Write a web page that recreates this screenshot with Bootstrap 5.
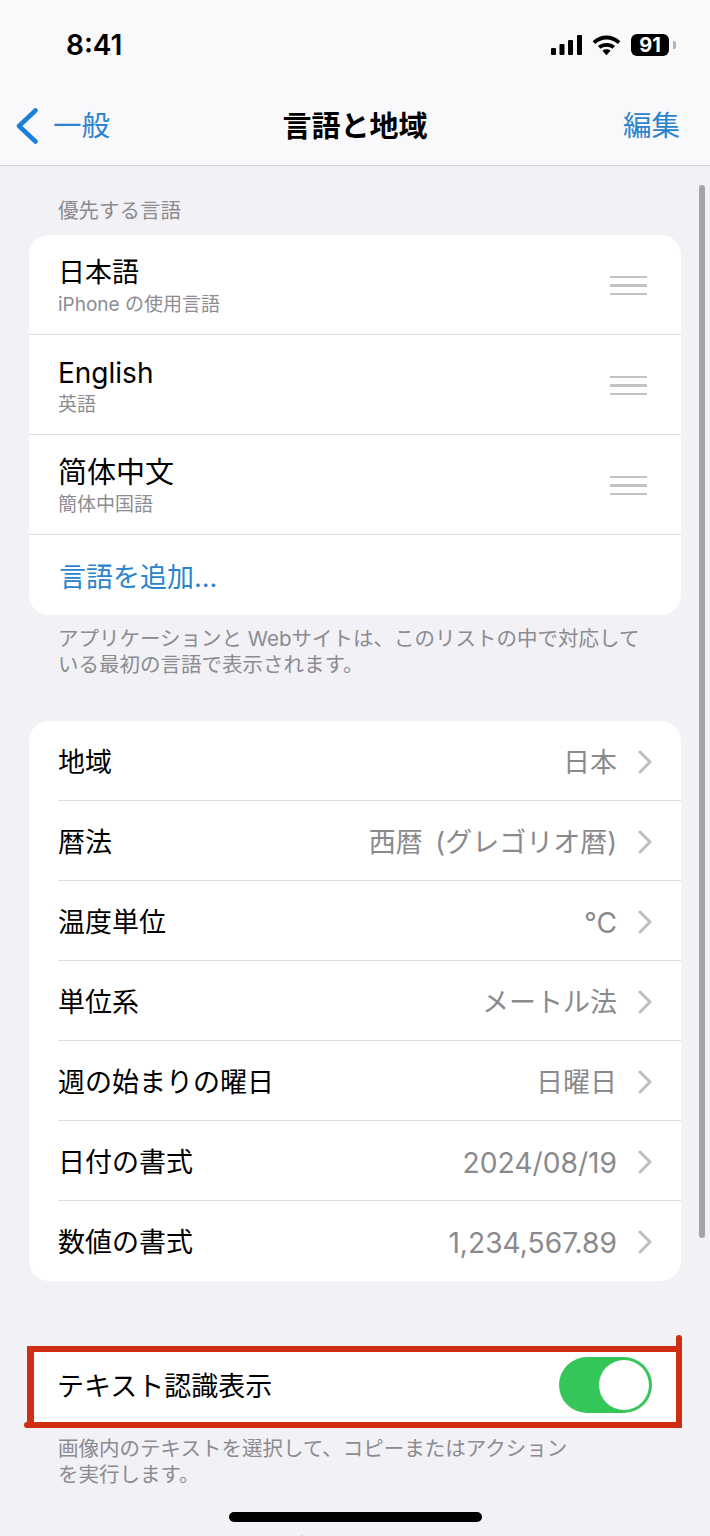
<!DOCTYPE html>
<html lang="ja">
<head>
<meta charset="utf-8">
<title>言語と地域</title>
<link href="https://cdn.jsdelivr.net/npm/bootstrap@5.3.0/dist/css/bootstrap.min.css" rel="stylesheet">
<style>
html,body{height:1536px;overflow:hidden}
body{width:710px;background:#f1f1f6;color:#000;font-family:"Inter","Liberation Sans","Noto Sans CJK JP",sans-serif;position:relative}
.ios-head{height:166px;background:#f9f9fb;border-bottom:1px solid #d6d6da}
.ios-status{height:90px;padding:0 34px 0 66px}
.ios-time{font-size:28px;font-weight:600;line-height:1}
.ios-icons{gap:10px}
.ios-batt{width:38px;height:22px;background:#000;color:#fff;border-radius:6px;font-size:20px;font-weight:700;line-height:22px;text-align:center}
.ios-nub{width:3px;height:8px;background:#b5b5b5;border-radius:0 2px 2px 0;margin-left:4px}
.ios-nav{height:75px;padding:0 30px 3px 16px}
.ios-link{color:#2b84cd;font-size:28.500px;line-height:1}
.ios-title{font-size:29px;font-weight:700;line-height:1;flex:none;margin-left:14px}
.ios-back{flex:1 1 0;gap:15px}
.ios-edit{flex:1 1 0;text-align:right}
.ios-main{padding:0 29px}
.ios-label{color:#8b8b90;font-size:20.500px;line-height:26px;padding:32px 0 11px 29px}
.ios-card{background:#fff;border-radius:20px;overflow:hidden}
.ios-card-gap{margin-top:43px}
.lang-row{height:100px;padding-left:29px;padding-right:34px}
.lang-name{font-size:27px;line-height:32px;padding-top:22px}
.lang-latin{font-size:28px}
.lang-wide{font-size:29px}
.lang-sub{font-size:19px;line-height:24px;color:#8c8c91;margin-top:4px}
.lang-inner{border-bottom:1px solid #dcdce0}
.lang-add{height:80px;padding-left:30px;padding-top:6px;color:#2b84cd;font-size:27px}
.grip{width:37px;display:flex;flex-direction:column;gap:5.800px;margin-top:2px}
.grip i{display:block;height:2.500px;background:#c3c3c6}
.ios-note{color:#8b8b90;font-size:20.500px;line-height:26px;padding:11px 29px 0}
.ios-note-tight{padding-top:8px}
.set-row{height:80px;padding-left:29px;padding-right:29px;padding-top:4px;position:relative;font-size:27px}
.set-row+.set-row::before{content:"";position:absolute;left:29px;right:0;top:-1px;height:1px;background:#dcdce0}
.set-val{color:#8a8a8e;margin-left:auto;margin-right:21px;word-spacing:5px}
.set-num{font-size:28.200px}
.chev{width:14px;height:24px;flex:none;margin-top:-3px}
.frame-row{height:82px;margin-top:65px;margin-left:-2px;margin-right:-1px;background:#fff;border:solid #cf2e12;border-width:6px 6px 6px 7px;padding:0 24px 4px 23px;font-size:27px;position:relative}
.frame-text{margin-top:4px}
.frame-tick{position:absolute;right:-6px;top:-17px;width:6px;height:11px;background:#cf2e12;border-radius:3px 3px 0 0}
.frame-foot{position:absolute;left:-10px;bottom:-6px;width:10px;height:6px;background:#cf2e12;border-radius:3px 0 0 3px}
.tog{width:93px;height:56px;background:#34c659;border-radius:28px;padding:3px;display:flex;justify-content:flex-end}
.tog i{display:block;width:50px;height:50px;background:#fff;border-radius:50%}
.ios-next{color:#8b8b90;font-size:22px;line-height:26px;text-align:center;margin-top:45px}
.scroll-thumb{position:absolute;left:699px;top:185px;width:6px;height:1053px;background:#a3a3a8;border-radius:3px}
.home-bar{position:absolute;left:229px;top:1512px;width:253px;height:10px;background:#000;border-radius:5px}
</style>
</head>
<body>
<header class="ios-head">
  <div class="ios-status d-flex align-items-center justify-content-between">
    <span class="ios-time">8:41</span>
    <div class="ios-icons d-flex align-items-center">
      <svg width="31" height="20" viewBox="0 0 31 20" fill="#000" aria-hidden="true"><rect x="0" y="13" width="5" height="7" rx="1"/><rect x="8.500" y="9" width="5" height="11" rx="1"/><rect x="17" y="5" width="5" height="15" rx="1"/><rect x="26" y="0" width="5" height="20" rx="1"/></svg>
      <svg width="29" height="22" viewBox="0 0 30 22" fill="none" stroke="#000" stroke-width="4" aria-hidden="true"><path d="M2 8.500C9.500 1.500 20.500 1.500 28 8.500"/><path d="M7.500 13.500C11.500 10 18.500 10 22.500 13.500"/><path d="M15 21.500L10.800 17C13 15 17 15 19.200 17Z" fill="#000" stroke="none"/></svg>
      <div class="d-flex align-items-center"><div class="ios-batt">91</div><div class="ios-nub"></div></div>
    </div>
  </div>
  <nav class="ios-nav d-flex align-items-center">
    <div class="ios-back ios-link d-flex align-items-center">
      <svg width="22" height="36" viewBox="0 0 22 36" fill="none" stroke="#1a7fd8" stroke-width="4.500" stroke-linecap="round" stroke-linejoin="round" aria-hidden="true"><path d="M19.500 2.500L3 18l16.500 15.500"/></svg>
      <span>一般</span>
    </div>
    <div class="ios-title">言語と地域</div>
    <div class="ios-edit ios-link">編集</div>
  </nav>
</header>
<main class="ios-main">
  <div class="ios-label">優先する言語</div>
  <section class="ios-card">
    <div class="lang-row d-flex justify-content-between align-items-center lang-inner">
      <div class="align-self-start"><div class="lang-name">日本語</div><div class="lang-sub">iPhone の使用言語</div></div>
      <div class="grip"><i></i><i></i><i></i></div>
    </div>
    <div class="lang-row d-flex justify-content-between align-items-center lang-inner">
      <div class="align-self-start"><div class="lang-name lang-latin">English</div><div class="lang-sub">英語</div></div>
      <div class="grip"><i></i><i></i><i></i></div>
    </div>
    <div class="lang-row d-flex justify-content-between align-items-center lang-inner">
      <div class="align-self-start"><div class="lang-name lang-wide">简体中文</div><div class="lang-sub">簡体中国語</div></div>
      <div class="grip"><i></i><i></i><i></i></div>
    </div>
    <div class="lang-add d-flex align-items-center">言語を追加...</div>
  </section>
  <p class="ios-note mb-0">アプリケーションと Webサイトは、このリストの中で対応して<br>いる最初の言語で表示されます。</p>
  <section class="ios-card ios-card-gap">
    <div class="set-row d-flex align-items-center"><span>地域</span><span class="set-val">日本</span><svg class="chev" viewBox="0 0 14 24" fill="none" stroke="#bfbfc3" stroke-width="3" stroke-linecap="round" stroke-linejoin="round" aria-hidden="true"><path d="M2 2l10 10L2 22"/></svg></div>
    <div class="set-row d-flex align-items-center"><span>暦法</span><span class="set-val">西暦 (グレゴリオ暦)</span><svg class="chev" viewBox="0 0 14 24" fill="none" stroke="#bfbfc3" stroke-width="3" stroke-linecap="round" stroke-linejoin="round" aria-hidden="true"><path d="M2 2l10 10L2 22"/></svg></div>
    <div class="set-row d-flex align-items-center"><span>温度単位</span><span class="set-val set-num">°C</span><svg class="chev" viewBox="0 0 14 24" fill="none" stroke="#bfbfc3" stroke-width="3" stroke-linecap="round" stroke-linejoin="round" aria-hidden="true"><path d="M2 2l10 10L2 22"/></svg></div>
    <div class="set-row d-flex align-items-center"><span>単位系</span><span class="set-val">メートル法</span><svg class="chev" viewBox="0 0 14 24" fill="none" stroke="#bfbfc3" stroke-width="3" stroke-linecap="round" stroke-linejoin="round" aria-hidden="true"><path d="M2 2l10 10L2 22"/></svg></div>
    <div class="set-row d-flex align-items-center"><span>週の始まりの曜日</span><span class="set-val">日曜日</span><svg class="chev" viewBox="0 0 14 24" fill="none" stroke="#bfbfc3" stroke-width="3" stroke-linecap="round" stroke-linejoin="round" aria-hidden="true"><path d="M2 2l10 10L2 22"/></svg></div>
    <div class="set-row d-flex align-items-center"><span>日付の書式</span><span class="set-val set-num">2024/08/19</span><svg class="chev" viewBox="0 0 14 24" fill="none" stroke="#bfbfc3" stroke-width="3" stroke-linecap="round" stroke-linejoin="round" aria-hidden="true"><path d="M2 2l10 10L2 22"/></svg></div>
    <div class="set-row d-flex align-items-center"><span>数値の書式</span><span class="set-val set-num">1,234,567.89</span><svg class="chev" viewBox="0 0 14 24" fill="none" stroke="#bfbfc3" stroke-width="3" stroke-linecap="round" stroke-linejoin="round" aria-hidden="true"><path d="M2 2l10 10L2 22"/></svg></div>
  </section>
  <section class="frame-row d-flex align-items-center justify-content-between">
    <span class="frame-text">テキスト認識表示</span>
    <div class="tog"><i></i></div>
    <span class="frame-tick"></span><span class="frame-foot"></span>
  </section>
  <p class="ios-note ios-note-tight mb-0">画像内のテキストを選択して、コピーまたはアクション<br>を実行します。</p>
  <div class="ios-next">2024年8月19日 月曜日</div>
</main>
<div class="scroll-thumb"></div>
<div class="home-bar"></div>
<script src="https://cdn.jsdelivr.net/npm/bootstrap@5.3.0/dist/js/bootstrap.bundle.min.js"></script>
</body>
</html>
